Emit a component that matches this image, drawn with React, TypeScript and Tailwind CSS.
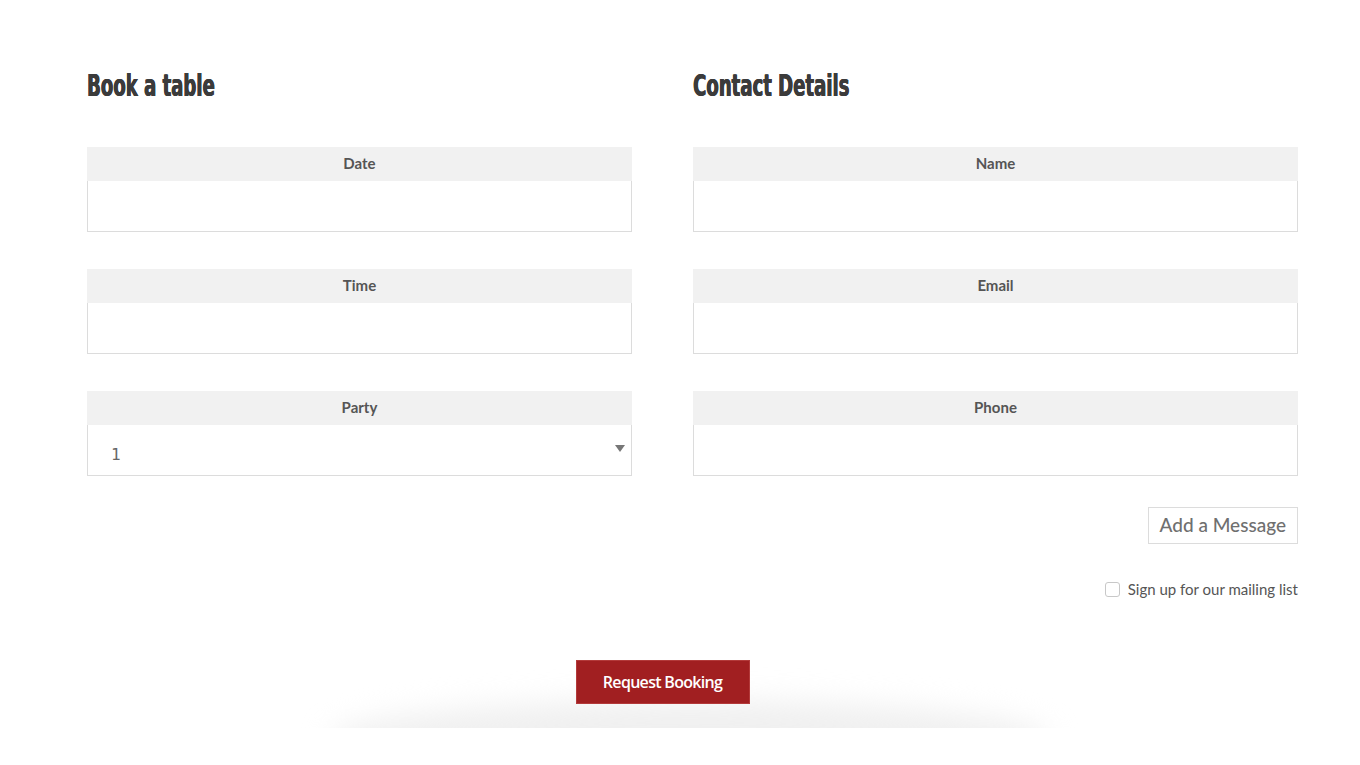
import React from 'react';

const Field = ({ label, select }: { label: string; select?: boolean }) => (
  <div className="flex flex-col">
    <div className="h-[34px] pb-[2px] bg-[#f1f1f1] flex items-center justify-center text-[15px] font-bold text-[#555]">
      {label}
    </div>
    {select ? (
      <div className="relative h-[51px] border border-[#dcdcdc] border-t-0 bg-white">
        <span className="absolute left-[23px] top-[22px] text-[16px] text-[#666] font-['DejaVu_Sans_Mono',monospace] leading-none">
          1
        </span>
        <span className="absolute right-[6px] top-[20px] w-0 h-0 border-l-[5px] border-r-[5px] border-t-[7px] border-l-transparent border-r-transparent border-t-[#777]" />
      </div>
    ) : (
      <div className="h-[51px] border border-[#dcdcdc] border-t-0 bg-white" />
    )}
  </div>
);

const Heading = ({ children }: { children: React.ReactNode }) => (
  <h2 className="h-[34px] text-[30px] leading-[34px] font-bold text-[#3b3b3b] font-['DejaVu_Sans_Condensed','DejaVu_Sans',sans-serif] whitespace-nowrap">
    <span className="inline-block origin-left scale-x-[0.67] translate-y-[1px] [text-shadow:0.7px_0_0_#3b3b3b,-0.3px_0_0_#3b3b3b]">
      {children}
    </span>
  </h2>
);

export default function App() {
  return (
    <div className="min-h-screen bg-white font-['Lato',sans-serif] text-[#555]">
      <div className="pt-[68px] pl-[87px] pr-[62px]">
        <div className="flex gap-[61px]">
          {/* Book a table */}
          <div className="w-[545px]">
            <Heading>Book a table</Heading>
            <div className="mt-[45px] flex flex-col gap-[37px]">
              <Field label="Date" />
              <Field label="Time" />
              <Field label="Party" select />
            </div>
          </div>

          {/* Contact Details */}
          <div className="w-[605px]">
            <Heading>Contact Details</Heading>
            <div className="mt-[45px] flex flex-col gap-[37px]">
              <Field label="Name" />
              <Field label="Email" />
              <Field label="Phone" />
            </div>
            <div className="flex justify-end mt-[31px]">
              <button className="h-[37px] px-[11px] border border-[#dcdcdc] text-[19px] font-medium text-[#6f6f6f] bg-white">
                Add a Message
              </button>
            </div>
            <div className="flex justify-end items-center gap-[8px] mt-[34px]">
              <span className="w-[15px] h-[15px] border border-[#c8c8c8] rounded-[3px] bg-white" />
              <span className="text-[15px] text-[#555]">Sign up for our mailing list</span>
            </div>
          </div>
        </div>
      </div>

      {/* Submit */}
      <div className="relative mt-[59px] h-[68px] overflow-hidden">
        <div className="absolute left-[330px] right-[310px] top-[40px] h-[80px] rounded-[50%] bg-[#f0f0f0] blur-[14px]" />
        <div className="relative flex justify-center pr-[35px]">
          <button className="w-[174px] h-[44px] bg-[#a11f21] border border-[#b33a3a] text-white text-[16px] font-semibold font-['Open_Sans',sans-serif] tracking-[-0.7px]">
            Request Booking
          </button>
        </div>
      </div>
    </div>
  );
}
